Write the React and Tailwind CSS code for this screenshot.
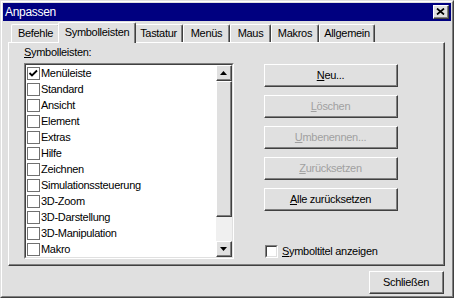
import React from 'react';

const items = [
  'Menüleiste', 'Standard', 'Ansicht', 'Element', 'Extras', 'Hilfe', 'Zeichnen',
  'Simulationssteuerung', '3D-Zoom', '3D-Darstellung', '3D-Manipulation', 'Makro',
];

const tabs = [
  { label: 'Befehle', w: 'w-[49px]' },
  { label: 'Symbolleisten', w: 'w-[78px]', active: true },
  { label: 'Tastatur', w: 'w-[49px]' },
  { label: 'Menüs', w: 'w-[47px]' },
  { label: 'Maus', w: 'w-[41px]' },
  { label: 'Makros', w: 'w-[48px]' },
  { label: 'Allgemein', w: 'w-[56px]' },
];

// raised 3d frame, classic windows style
function Raised({ className = '', children }) {
  return (
    <div className={`border border-t-white border-l-white border-r-[#404040] border-b-[#404040] bg-[#e0e0e0] ${className}`}>
      <div className="flex h-full w-full items-center justify-center border-r border-b border-r-[#808080] border-b-[#808080]">
        {children}
      </div>
    </div>
  );
}

function Button({ disabled, children, className = 'w-[134px]' }) {
  return (
    <Raised className={`h-[23px] ${className}`}>
      <span className={disabled ? 'text-[#a0a0a0]' : 'text-black'}>{children}</span>
    </Raised>
  );
}

function Check() {
  return (
    <svg width="11" height="11" viewBox="0 0 11 11">
      <path d="M1.5 5 L4 7.5 L9 2.5" fill="none" stroke="black" strokeWidth="1.8" />
    </svg>
  );
}

function Arrow({ down }) {
  return (
    <svg width="7" height="4" viewBox="0 0 7 4">
      <path d={down ? 'M0 0 H7 L3.5 4 Z' : 'M3.5 0 L7 4 H0 Z'} fill="black" />
    </svg>
  );
}

export default function App() {
  return (
    <div className="w-[454px] h-[298px] bg-[#e0e0e0] text-black text-[11px] leading-[13px] tracking-[-0.3px] font-['Liberation_Sans',Arial,sans-serif] border border-t-[#e0e0e0] border-l-[#e0e0e0] border-r-[#404040] border-b-[#404040]">
      <div className="flex h-full flex-col border border-t-white border-l-white border-r-[#808080] border-b-[#808080] p-px">
        {/* Title bar */}
        <div className="flex h-[18px] items-center justify-between bg-[#000080] pl-[2px] pr-[2px]">
          <span className="text-[12px] text-white">Anpassen</span>
          <Raised className="h-[14px] w-[16px]">
            <svg width="9" height="7" viewBox="0 0 9 7">
              <path d="M1 0.5 L8 6.5 M8 0.5 L1 6.5" stroke="black" strokeWidth="1.7" />
            </svg>
          </Raised>
        </div>

        <div className="flex flex-1 flex-col pl-[5px] pr-[6px] pt-px">
          {/* Tabs */}
          <div className="flex h-[20px] items-end pl-[3px]">
            {tabs.map((t) =>
              t.active ? (
                <div
                  key={t.label}
                  className={`relative z-10 -mx-[2px] -mb-px flex h-[21px] items-center justify-center rounded-t-[2px] border-t border-l border-r border-t-white border-l-white border-r-[#404040] bg-[#e0e0e0] pb-[2px] shadow-[inset_-1px_0_0_#808080] ${t.w}`}
                >
                  {t.label}
                </div>
              ) : (
                <div
                  key={t.label}
                  className={`flex h-[18px] items-center justify-center rounded-t-[2px] border-t border-l border-r border-t-white border-l-white border-r-[#404040] shadow-[inset_-1px_0_0_#808080] ${t.w}`}
                >
                  {t.label}
                </div>
              )
            )}
          </div>

          {/* Tab panel */}
          <div className="flex h-[224px] flex-col border border-t-white border-l-white border-r-[#404040] border-b-[#404040] pl-[15px] pt-[3px] shadow-[inset_-1px_-1px_0_#808080]">
            <div>
              <span className="underline">S</span>ymbolleisten:
            </div>
            <div className="mt-[4px] flex">
              {/* List box */}
              <div className="h-[196px] w-[210px] border border-t-[#808080] border-l-[#808080] border-r-white border-b-white">
                <div className="flex h-full border border-t-[#404040] border-l-[#404040] border-r-[#e0e0e0] border-b-[#e0e0e0] bg-white">
                  <div className="flex flex-1 flex-col overflow-hidden">
                    {items.map((it, i) => (
                      <div key={it} className="flex h-[16px] shrink-0 items-center pl-px">
                        <div className="mr-px flex h-[13px] w-[13px] items-center justify-center border border-[#707070] bg-white">
                          {i === 0 && <Check />}
                        </div>
                        <span className="whitespace-nowrap">{it}</span>
                      </div>
                    ))}
                  </div>
                  {/* Scrollbar */}
                  <div className="flex w-[16px] flex-col">
                    <Raised className="h-[16px] w-[16px]"><Arrow /></Raised>
                    <Raised className="h-[136px] w-[16px]" />
                    <div className="flex-1 bg-[#f0f0f0]" />
                    <Raised className="h-[16px] w-[16px]"><Arrow down /></Raised>
                  </div>
                </div>
              </div>

              {/* Buttons */}
              <div className="ml-[30px] flex w-[134px] flex-col gap-[8px] pt-px">
                <Button><span className="underline">N</span>eu...</Button>
                <Button disabled><span className="underline">L</span>öschen</Button>
                <Button disabled><span className="underline">U</span>mbenennen...</Button>
                <Button disabled><span className="underline">Z</span>urücksetzen</Button>
                <Button><span className="underline">A</span>lle zurücksetzen</Button>
                <div className="mt-auto flex h-[16px] items-center gap-[4px] pl-px">
                  <div className="h-[13px] w-[13px] border border-t-[#808080] border-l-[#808080] border-r-white border-b-white">
                    <div className="h-full w-full border border-t-[#404040] border-l-[#404040] border-r-[#e0e0e0] border-b-[#e0e0e0] bg-white" />
                  </div>
                  <span>
                    <span className="underline">S</span>ymboltitel anzeigen
                  </span>
                </div>
              </div>
            </div>
          </div>

          <div className="mt-[5px] flex justify-end pr-px">
            <Button className="w-[75px]">Schließen</Button>
          </div>
        </div>
      </div>
    </div>
  );
}
